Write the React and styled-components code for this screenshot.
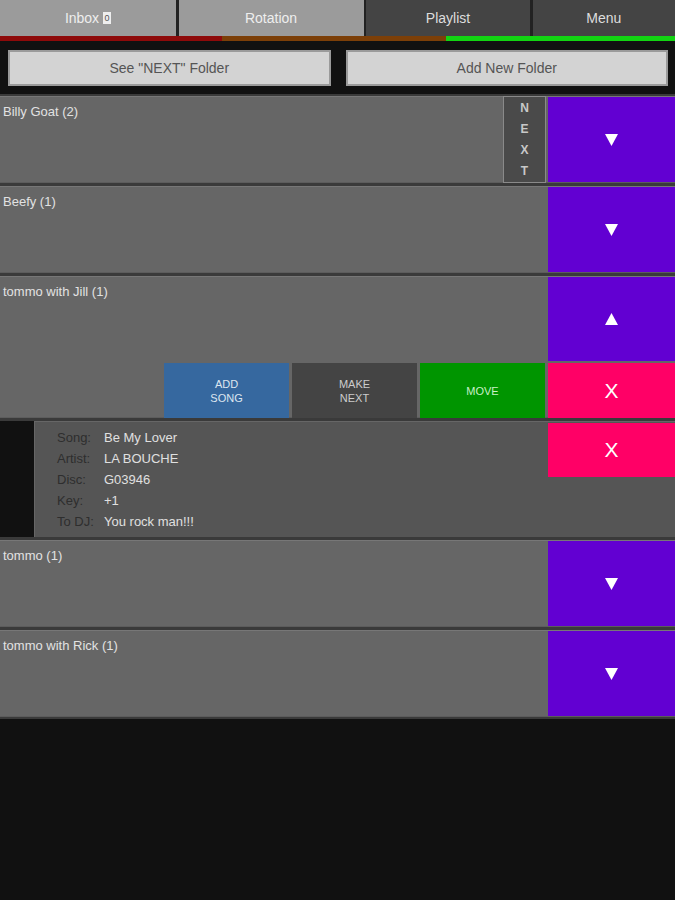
import React from 'react';
import styled, { createGlobalStyle } from 'styled-components';

const GlobalStyle = createGlobalStyle`
    body {
        margin: 0;
        background: #111;
        font-family: "Liberation Sans", Arial, sans-serif;
    }
`;

const Page = styled.div`
    width: 675px;
    min-height: 900px;
    background: #111;
`;

const TabBar = styled.div`
    display: grid;
    grid-template-columns: 176px 185px 164px 1fr;
    column-gap: 2.5px;
    height: 36px;
    background: #222;
`;

const Tab = styled.div`
    display: flex;
    align-items: center;
    justify-content: center;
    gap: 4px;
    background: ${(p) => (p.$light ? '#9b9b9b' : '#444')};
    color: ${(p) => (p.$light ? '#eee' : '#ddd')};
    font-size: 14px;
`;

const Badge = styled.span`
    display: inline-flex;
    align-items: center;
    justify-content: center;
    width: 8px;
    height: 12px;
    background: #eee;
    color: #555;
    font-size: 9px;
`;

const ColorBar = styled.div`
    display: grid;
    grid-template-columns: 222px 224px 1fr;
    height: 5px;
`;

const Segment = styled.div`
    background: ${(p) => p.$color};
`;

const ButtonRow = styled.div`
    display: grid;
    grid-template-columns: 1fr 1fr;
    gap: 15px;
    padding: 9px 7px 8px 8px;
`;

const WideButton = styled.div`
    display: flex;
    align-items: center;
    justify-content: center;
    height: 32px;
    background: #d3d3d3;
    border: 2px solid #9a9a9a;
    color: #555;
    font-size: 14px;
`;

const List = styled.div`
    display: flex;
    flex-direction: column;
    gap: 3px;
    padding: 2px 0 2px;
    background: #3a3a3a;
`;

const Folder = styled.div`
    display: flex;
    flex-direction: column;
    background: #666;
    box-shadow: inset 0 1px 0 #777, inset 0 -1px 0 #5c5c5c;
`;

const FolderHead = styled.div`
    display: flex;
    height: 87px;
`;

const FolderTitle = styled.div`
    flex: 1;
    padding: 8px 3px;
    color: #e2e2e2;
    font-size: 13px;
`;

const NextTag = styled.div`
    display: flex;
    flex-direction: column;
    align-items: center;
    justify-content: space-around;
    width: 41px;
    margin-right: 2px;
    background: #4a4a4a;
    border: 1px solid #8a8a8a;
    color: #c8c8c8;
    font-size: 12px;
    font-weight: bold;
`;

const Toggle = styled.div`
    display: flex;
    align-items: center;
    justify-content: center;
    width: 127px;
    margin: 1px 0 ${(p) => (p.$open ? '2px' : '1px')};
    background: #6200d2;
`;

const ActionRow = styled.div`
    display: grid;
    grid-template-columns: repeat(3, 125px) 127px;
    justify-content: end;
    gap: 3px;
    height: 55px;
`;

const Action = styled.div`
    display: flex;
    align-items: center;
    justify-content: center;
    text-align: center;
    background: ${(p) => p.$bg};
    color: ${(p) => p.$fg || '#ddd'};
    font-size: ${(p) => (p.$big ? '21px' : '11px')};
    line-height: 14px;
`;

const Detail = styled.div`
    display: flex;
    height: 116px;
    background: #111;
`;

const DetailPanel = styled.div`
    flex: 1;
    display: flex;
    margin-left: 34px;
    background: #555;
    box-shadow: inset 1px 1px 0 #666;
`;

const Fields = styled.div`
    flex: 1;
    padding: 6px 0 0 23px;
`;

const Field = styled.div`
    display: flex;
    height: 21px;
    align-items: center;
    font-size: 13px;
`;

const Label = styled.span`
    width: 47px;
    color: #2e2e2e;
`;

const Value = styled.span`
    color: #e0e0e0;
`;

const RemoveSong = styled.div`
    display: flex;
    align-items: center;
    justify-content: center;
    align-self: flex-start;
    width: 127px;
    height: 54px;
    margin-top: 2px;
    background: #ff0066;
    color: #fff;
    font-size: 21px;
`;

const Arrow = ({ up }) => (
    <svg width="13" height="12" viewBox="0 0 13 12">
        <polygon points={up ? '6.5,0 13,12 0,12' : '0,0 13,0 6.5,12'} fill="#fff" />
    </svg>
);

const folders = [
    { name: 'Billy Goat (2)', next: true },
    { name: 'Beefy (1)' },
    { name: 'tommo with Jill (1)', open: true },
    { name: 'tommo (1)' },
    { name: 'tommo with Rick (1)' },
];

const song = [
    ['Song:', 'Be My Lover'],
    ['Artist:', 'LA BOUCHE'],
    ['Disc:', 'G03946'],
    ['Key:', '+1'],
    ['To DJ:', 'You rock man!!!'],
];

const App = () => (
    <Page>
        <GlobalStyle />
        <TabBar>
            <Tab $light>
                Inbox <Badge>0</Badge>
            </Tab>
            <Tab $light>Rotation</Tab>
            <Tab>Playlist</Tab>
            <Tab>Menu</Tab>
        </TabBar>
        <ColorBar>
            <Segment $color="#8e0a0a" />
            <Segment $color="#7c3f08" />
            <Segment $color="#12d412" />
        </ColorBar>
        <ButtonRow>
            <WideButton>See "NEXT" Folder</WideButton>
            <WideButton>Add New Folder</WideButton>
        </ButtonRow>
        <List>
            {folders.map(({ name, next, open }) => (
                <React.Fragment key={name}>
                    <Folder>
                        <FolderHead>
                            <FolderTitle>{name}</FolderTitle>
                            {next && (
                                <NextTag>
                                    {'NEXT'.split('').map((c) => (
                                        <span key={c}>{c}</span>
                                    ))}
                                </NextTag>
                            )}
                            <Toggle $open={open}>
                                <Arrow up={open} />
                            </Toggle>
                        </FolderHead>
                        {open && (
                            <ActionRow>
                                <Action $bg="#36689f" $fg="#dde6f0">
                                    ADD
                                    <br />
                                    SONG
                                </Action>
                                <Action $bg="#444" $fg="#ccc">
                                    MAKE
                                    <br />
                                    NEXT
                                </Action>
                                <Action $bg="#009500" $fg="#c8f0c8">
                                    MOVE
                                </Action>
                                <Action $bg="#ff0066" $fg="#fff" $big>
                                    X
                                </Action>
                            </ActionRow>
                        )}
                    </Folder>
                    {open && (
                        <Detail>
                            <DetailPanel>
                                <Fields>
                                    {song.map(([label, value]) => (
                                        <Field key={label}>
                                            <Label>{label}</Label>
                                            <Value>{value}</Value>
                                        </Field>
                                    ))}
                                </Fields>
                                <RemoveSong>X</RemoveSong>
                            </DetailPanel>
                        </Detail>
                    )}
                </React.Fragment>
            ))}
        </List>
    </Page>
);

export default App;
